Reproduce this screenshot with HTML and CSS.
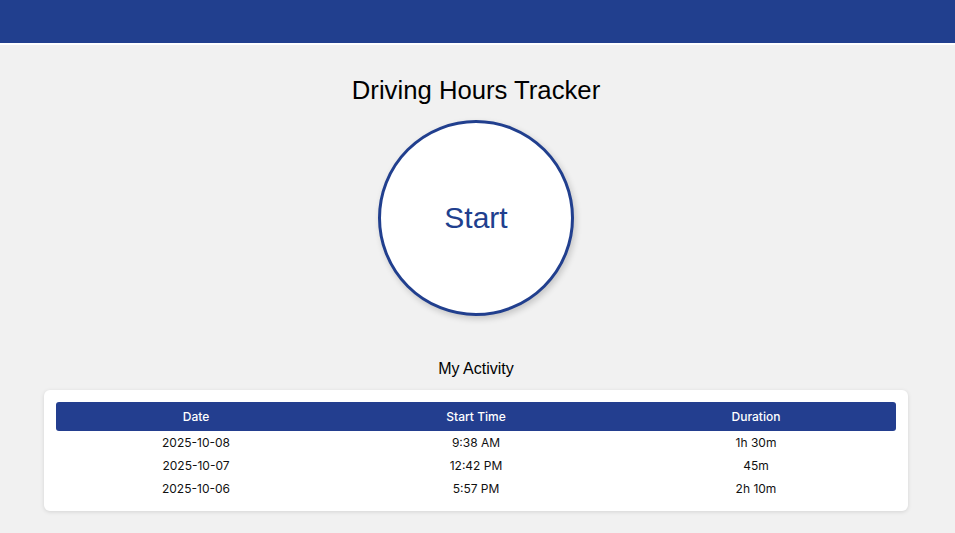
FILE: index.html
```html
<!DOCTYPE html>
<html lang="en">
<head>
<meta charset="utf-8">
<title>Driving Hours Tracker</title>
<link rel="stylesheet" href="styles.css">
</head>
<body>
<header class="topbar"></header>
<main class="page">
  <h1 class="title">Driving Hours Tracker</h1>
  <button class="start-btn" type="button">Start</button>
  <h2 class="section-title">My Activity</h2>
  <section class="card">
    <table class="activity">
      <thead>
        <tr><th>Date</th><th>Start Time</th><th>Duration</th></tr>
      </thead>
      <tbody>
        <tr><td>2025-10-08</td><td>9:38 AM</td><td>1h 30m</td></tr>
        <tr><td>2025-10-07</td><td>12:42 PM</td><td>45m</td></tr>
        <tr><td>2025-10-06</td><td>5:57 PM</td><td>2h 10m</td></tr>
      </tbody>
    </table>
  </section>
</main>
</body>
</html>
```
FILE: styles.css
```css
* { box-sizing: border-box; }
html, body { margin: 0; padding: 0; }
body {
  background: #f1f1f1;
  font-family: "Liberation Sans", Arial, sans-serif;
  color: #000;
  width: 955px;
  height: 533px;
  overflow: hidden;
}
.topbar {
  height: 45px;
  background: #213f8e;
  border-bottom: 2px solid #ffffff;
}
.page {
  display: flex;
  flex-direction: column;
  align-items: center;
  padding: 0 47px 0 44px;
}
.title {
  margin: 31px 0 0;
  font-size: 25.7px;
  line-height: 29px;
  font-weight: 400;
}
.start-btn {
  margin-top: 15px;
  width: 196px;
  height: 196px;
  border-radius: 50%;
  border: 3px solid #213f8e;
  background: #fff;
  color: #213f8e;
  font-family: "Liberation Sans", Arial, sans-serif;
  font-size: 30px;
  padding: 0;
  box-shadow: 2px 3px 6px rgba(0,0,0,0.18);
}
.section-title {
  margin: 44px 0 0;
  font-size: 16px;
  line-height: 18px;
  font-weight: 400;
}
.card {
  margin-top: 12px;
  align-self: stretch;
  background: #fff;
  border-radius: 6px;
  box-shadow: 0 1px 4px rgba(0,0,0,0.12);
  padding: 12px 12px 11px;
}
.activity {
  width: 100%;
  border-collapse: separate;
  border-spacing: 0;
  table-layout: fixed;
  font-family: Inter, "Liberation Sans", sans-serif;
  font-size: 12px;
}
.activity th {
  background: #233e8f;
  color: #fff;
  font-weight: 500;
  padding: 7px 8px;
  line-height: 15px;
}
.activity th:first-child { border-radius: 3px 0 0 3px; }
.activity th:last-child { border-radius: 0 3px 3px 0; }
.activity td {
  text-align: center;
  padding: 4px 8px;
  line-height: 15px;
  color: #111;
}
```
